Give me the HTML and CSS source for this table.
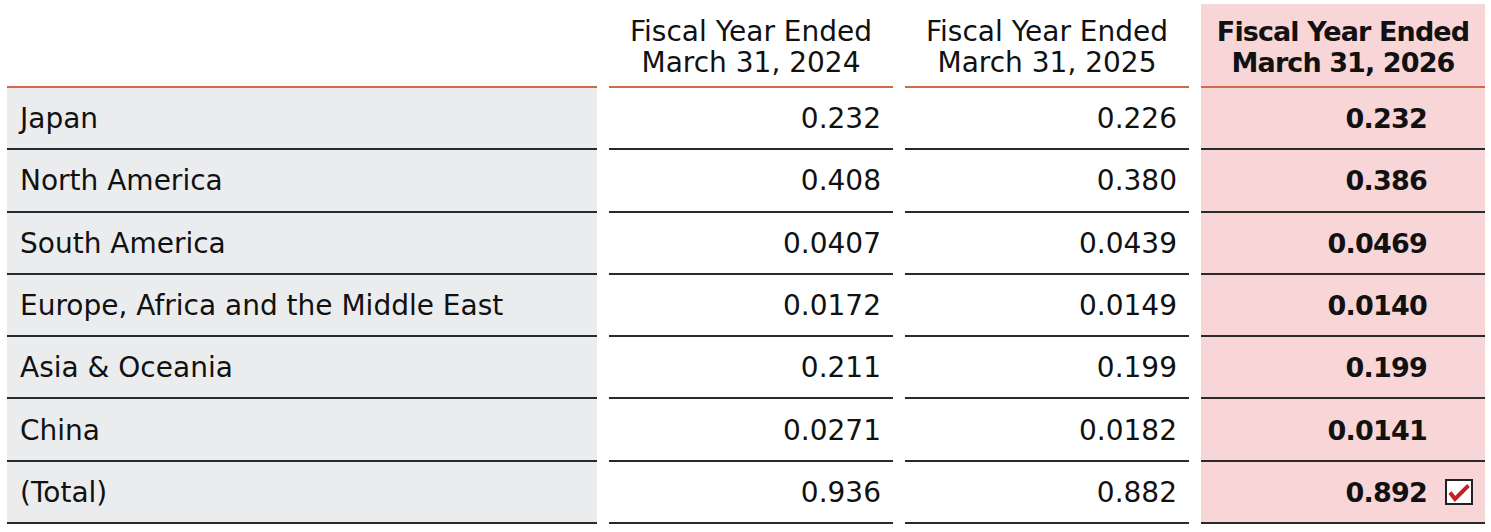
FILE: index.html
```html
<!DOCTYPE html>
<html lang="en">
<head>
<meta charset="utf-8">
<title>Fiscal Year Table</title>
<link rel="stylesheet" href="styles.css">
</head>
<body>
<div class="table">
  <div class="hcell blank"></div>
  <div class="hcell">Fiscal Year Ended<br>March 31, 2024</div>
  <div class="hcell">Fiscal Year Ended<br>March 31, 2025</div>
  <div class="hcell hl">Fiscal Year Ended<br>March 31, 2026</div>

  <div class="cell label">Japan</div>
  <div class="cell num">0.232</div>
  <div class="cell num">0.226</div>
  <div class="cell num hl"><span>0.232</span><span class="mark"></span></div>

  <div class="cell label">North America</div>
  <div class="cell num">0.408</div>
  <div class="cell num">0.380</div>
  <div class="cell num hl"><span>0.386</span><span class="mark"></span></div>

  <div class="cell label">South America</div>
  <div class="cell num">0.0407</div>
  <div class="cell num">0.0439</div>
  <div class="cell num hl"><span>0.0469</span><span class="mark"></span></div>

  <div class="cell label">Europe, Africa and the Middle East</div>
  <div class="cell num">0.0172</div>
  <div class="cell num">0.0149</div>
  <div class="cell num hl"><span>0.0140</span><span class="mark"></span></div>

  <div class="cell label">Asia &amp; Oceania</div>
  <div class="cell num">0.211</div>
  <div class="cell num">0.199</div>
  <div class="cell num hl"><span>0.199</span><span class="mark"></span></div>

  <div class="cell label">China</div>
  <div class="cell num">0.0271</div>
  <div class="cell num">0.0182</div>
  <div class="cell num hl"><span>0.0141</span><span class="mark"></span></div>

  <div class="cell label">(Total)</div>
  <div class="cell num">0.936</div>
  <div class="cell num">0.882</div>
  <div class="cell num hl"><span>0.892</span><span class="mark"><svg class="check" width="28" height="26" viewBox="0 0 28 26"><rect x="1" y="1" width="26" height="24" fill="#fff" stroke="#222" stroke-width="2"/><path d="M5 13.5 L10 20 L23.5 6.5" fill="none" stroke="#c41e2a" stroke-width="4" stroke-linecap="butt" stroke-linejoin="miter"/></svg></span></div>
</div>
</body>
</html>
```

FILE: styles.css
```css
html, body {
  margin: 0;
  padding: 0;
  background: #ffffff;
}
body {
  font-family: "DejaVu Sans", "Noto Sans", sans-serif;
  color: #111;
}
.table {
  display: grid;
  grid-template-columns: 590px 284px 284px 284px;
  column-gap: 12px;
  margin-left: 7px;
}
.hcell {
  font-size: 28px;
  line-height: 31px;
  text-align: center;
  padding: 16px 0 8px;
  border-bottom: 2px solid #d2694b;
}
.hcell.hl {
  font-size: 27px;
  font-weight: 700;
  letter-spacing: -0.9px;
  background: #f8d5d7;
  margin-top: 4px;
  padding-top: 12px;
}
.cell {
  border-bottom: 2px solid #2a2a2a;
  font-size: 28px;
  display: flex;
  align-items: center;
  padding-top: 1px;
  box-sizing: border-box;
  height: 62.3px;
}
.label {
  background: #ebecee;
  padding-left: 13px;
}
.num {
  justify-content: flex-end;
  padding-right: 12px;
}
.num.hl {
  background: #f8d5d7;
  font-size: 27px;
  font-weight: 700;
  letter-spacing: -0.8px;
  gap: 18px;
}
.mark {
  width: 28px;
  height: 26px;
  display: flex;
}
.check {
  display: block;
}
```
